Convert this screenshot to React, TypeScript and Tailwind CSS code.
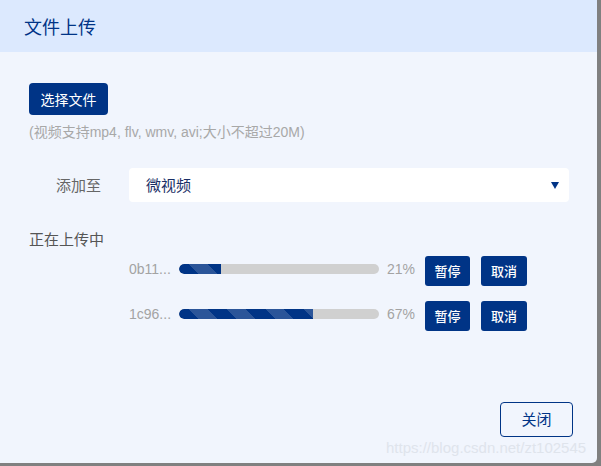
import React from "react"

const cjk = "font-['Microsoft_YaHei','Noto_Sans_CJK_SC',sans-serif]"
const latin = "font-['Liberation_Sans','Noto_Sans_CJK_SC',sans-serif]"

type Upload = { name: string; percent: number }

const uploads: Upload[] = [
  { name: "0b11...", percent: 21 },
  { name: "1c96...", percent: 67 },
]

function UploadRow({ item }: { item: Upload }) {
  return (
    <div className="flex items-center h-[30px] pl-[100px]">
      <div className="flex items-center mb-[4px]">
        <span className={`w-[50px] text-[14px] text-[#a3a3a3] ${latin}`}>{item.name}</span>
        <div className="w-[200px] h-[10px] rounded-full bg-[#d0d0d0] overflow-hidden">
          <div
            className="h-full rounded-l-full bg-[repeating-linear-gradient(45deg,#003486_0px,#003486_14px,#2b5599_14px,#2b5599_27px)]"
            style={{ width: `${item.percent}%` }}
          />
        </div>
        <span className={`w-[38px] ml-[8px] text-[14px] text-[#a3a3a3] ${latin}`}>{item.percent}%</span>
      </div>
      <button className={`w-[45px] h-[30px] rounded-[3px] bg-[#003486] text-white text-[13px] font-medium ${cjk}`}>
        暂停
      </button>
      <button className={`w-[46px] h-[30px] ml-[11px] rounded-[3px] bg-[#003486] text-white text-[13px] font-medium ${cjk}`}>
        取消
      </button>
    </div>
  )
}

export default function App() {
  return (
    <div className="w-[601px] h-[466px] bg-[#808080]">
      <div className={`relative w-[597px] h-[463px] bg-[#f1f5fd] rounded-br-[5px] flex flex-col ${cjk}`}>
        <div className="h-[52px] px-[24px] flex items-center bg-[#dce9fe] text-[18px] text-[#003486]">
          文件上传
        </div>

        <div className="pl-[29px] pr-[28px] pt-[31px] flex flex-col">
          <button className="self-start w-[79px] h-[32px] rounded-[4px] bg-[#003486] text-white text-[14px]">
            选择文件
          </button>
          <p className={`mt-[8px] text-[14px] leading-[18px] text-[#a8a8a8] ${latin}`}>
            (视频支持mp4, flv, wmv, avi;大小不超过20M)
          </p>

          <div className="mt-[27px] flex items-center">
            <span className="w-[72px] text-right text-[15px] text-[#666]">添加至</span>
            <div className="ml-[28px] flex-1 h-[34px] rounded-[4px] bg-white flex items-center pl-[17px] pr-[10px]">
              <span className="flex-1 text-[15px] text-[#1a2f66]">微视频</span>
              <svg width="8" height="7" viewBox="0 0 8 7">
                <path d="M0 0 H8 L4 7 Z" fill="#003486" />
              </svg>
            </div>
          </div>

          <div className="mt-[27px] text-[15px] leading-[20px] text-[#555]">正在上传中</div>

          <div className="mt-[7px] flex flex-col gap-[15px]">
            {uploads.map((u) => (
              <UploadRow key={u.name} item={u} />
            ))}
          </div>
        </div>

        <div className="mt-auto flex justify-end pr-[24px] pb-[26px]">
          <button className="w-[73px] h-[35px] rounded-[4px] border border-[#003486] text-[15px] text-[#003486]">
            关闭
          </button>
        </div>

        <span className={`absolute left-[386px] top-[439px] text-[15px] leading-[18px] text-[#dfe4ec] ${latin}`}>
          https://blog.csdn.net/zt102545
        </span>
      </div>
    </div>
  )
}
